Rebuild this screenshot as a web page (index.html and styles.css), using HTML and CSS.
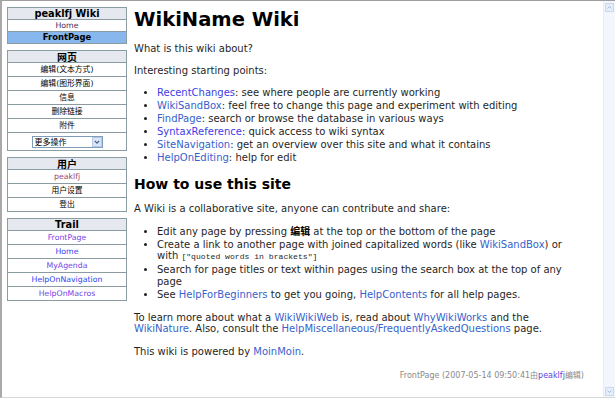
FILE: index.html
```html
<!DOCTYPE html>
<html>
<head>
<meta charset="utf-8">
<title>FrontPage - peaklfj Wiki</title>
<link rel="stylesheet" href="styles.css">
</head>
<body>
<div class="window">
  <div class="page">
    <div class="sidebar">
      <div class="panel">
        <div class="panel-title">peaklfj Wiki</div>
        <a class="row row-s link-home">Home</a>
        <a class="row row-s current">FrontPage</a>
      </div>
      <div class="panel">
        <div class="panel-title cjk-title">网页</div>
        <a class="row">编辑(文本方式)</a>
        <a class="row">编辑(图形界面)</a>
        <a class="row">信息</a>
        <a class="row">删除链接</a>
        <a class="row">附件</a>
        <div class="row row-select">
          <div class="select">
            <span class="select-text">更多操作</span>
            <span class="select-btn">
              <svg width="9" height="9" viewBox="0 0 9 9"><path d="M2 3.2 L4.5 5.8 L7 3.2" fill="none" stroke="#4d6185" stroke-width="1.5"/></svg>
            </span>
          </div>
        </div>
      </div>
      <div class="panel">
        <div class="panel-title cjk-title">用户</div>
        <a class="row link-user">peaklfj</a>
        <a class="row">用户设置</a>
        <a class="row">登出</a>
      </div>
      <div class="panel">
        <div class="panel-title">Trail</div>
        <a class="row link-v">FrontPage</a>
        <a class="row link-b">Home</a>
        <a class="row link-v">MyAgenda</a>
        <a class="row link-b">HelpOnNavigation</a>
        <a class="row link-v">HelpOnMacros</a>
      </div>
    </div>

    <div class="main">
      <h1>WikiName Wiki</h1>
      <p>What is this wiki about?</p>
      <p>Interesting starting points:</p>
      <ul>
        <li><a class="visited">RecentChanges</a>: see where people are currently working</li>
        <li><a>WikiSandBox</a>: feel free to change this page and experiment with editing</li>
        <li><a>FindPage</a>: search or browse the database in various ways</li>
        <li><a class="visited">SyntaxReference</a>: quick access to wiki syntax</li>
        <li><a>SiteNavigation</a>: get an overview over this site and what it contains</li>
        <li><a>HelpOnEditing</a>: help for edit</li>
      </ul>
      <h2>How to use this site</h2>
      <p>A Wiki is a collaborative site, anyone can contribute and share:</p>
      <ul>
        <li>Edit any page by pressing <strong class="cjk-bold">编辑</strong> at the top or the bottom of the page</li>
        <li><span>Create a link to another page with joined capitalized words (like </span><a>WikiSandBox</a><span>) or</span> <span>with</span> <code>["quoted words in brackets"]</code></li>
        <li>Search for page titles or text within pages using the search box at the top of any page</li>
        <li>See <a>HelpForBeginners</a> to get you going, <a>HelpContents</a> for all help pages.</li>
      </ul>
      <p>To learn more about what a <a>WikiWikiWeb</a> is, read about <a>WhyWikiWorks</a> and the <a>WikiNature</a>. Also, consult the <a>HelpMiscellaneous/FrequentlyAskedQuestions</a> page.</p>
      <p>This wiki is powered by <a>MoinMoin</a>.</p>
      <div class="footer">FrontPage (2007-05-14 09:50:41由<a class="footer-user">peaklfj</a>编辑)</div>
    </div>
  </div>
  <div class="scrollbar">
    <div class="sb-btn">
      <svg width="9" height="9" viewBox="0 0 9 9"><path d="M2 5.6 L4.5 3.2 L7 5.6" fill="none" stroke="#9fb2d2" stroke-width="1.2"/></svg>
    </div>
    <div class="sb-btn">
      <svg width="9" height="9" viewBox="0 0 9 9"><path d="M2 3.4 L4.5 5.8 L7 3.4" fill="none" stroke="#9fb2d2" stroke-width="1.2"/></svg>
    </div>
  </div>
</div>
</body>
</html>
```

FILE: styles.css
```css
html, body {
  margin: 0;
  padding: 0;
  background: #ffffff;
}

body {
  width: 615px;
  height: 398px;
  overflow: hidden;
  font-family: "DejaVu Sans", Verdana, "Noto Sans CJK SC", sans-serif;
}

.window {
  display: flex;
  width: 615px;
  height: 398px;
  box-sizing: border-box;
  border-top: 1px solid #9d9d9d;
  border-left: 2px solid #a9a9a9;
  border-bottom: 1px solid #d6d6d6;
  background: #ffffff;
}

.page {
  flex: 1;
  display: flex;
  gap: 7px;
  padding: 6px 0 0 5px;
  min-width: 0;
}

/* ---------- sidebar ---------- */
.sidebar {
  width: 120px;
  flex: none;
  display: flex;
  flex-direction: column;
  gap: 6px;
}

.panel {
  border: 1px solid #8a9ca2;
  background: #ffffff;
  display: flex;
  flex-direction: column;
}

.panel-title {
  height: 11px;
  line-height: 11px;
  background: #e5e8ee;
  text-align: center;
  font-size: 9.8px;
  font-weight: bold;
  color: #000000;
}

.cjk-title {
  font-family: "Noto Sans CJK SC", sans-serif;
  font-size: 10px;
}

.row {
  display: block;
  height: 13px;
  line-height: 13px;
  border-top: 1px solid #8a9ca2;
  text-align: center;
  font-size: 7.8px;
  color: #000000;
  text-decoration: none;
  font-family: "DejaVu Sans", "Noto Sans CJK SC", sans-serif;
  white-space: nowrap;
}

.row-s {
  height: 11px;
  line-height: 11px;
}

.current {
  background: #88b7ee;
  font-weight: bold;
  font-size: 8.4px;
}

.link-home { color: #4a2a5a; }
.link-user { color: #9a3f6e; }
.link-v { color: #7446e6; }
.link-b { color: #2d45f2; }

.row-select {
  height: 17px;
  display: flex;
  align-items: center;
  justify-content: center;
}

.select {
  width: 71px;
  height: 12px;
  box-sizing: border-box;
  border: 1px solid #7f9db9;
  background: #ffffff;
  display: flex;
  align-items: center;
  justify-content: space-between;
}

.select-text {
  padding-left: 2px;
  font-size: 8px;
  line-height: 10px;
  font-family: "Noto Sans CJK SC", sans-serif;
}

.select-btn {
  width: 10px;
  height: 10px;
  box-sizing: border-box;
  border: 1px solid #b6c8e6;
  background: #d9e6fa;
  display: flex;
  align-items: center;
  justify-content: center;
}

.select-btn svg {
  width: 8px;
  height: 8px;
}

/* ---------- main ---------- */
.main {
  flex: 1;
  min-width: 0;
  padding-top: 1px;
  padding-right: 19px;
  font-size: 10px;
  line-height: 11.7px;
  color: #1f1f1f;
}

.main h1 {
  font-size: 19.5px;
  line-height: 24px;
  margin: 0 0 9px;
  color: #000000;
}

.main h2 {
  font-size: 14px;
  line-height: 17px;
  margin: 11.5px 0 10.7px;
  color: #000000;
}

.main p {
  margin: 10.7px 0;
}

.main ul {
  margin: 10.7px 0;
  padding-left: 23px;
}

.main li {
  margin-bottom: 1.3px;
}

.main a {
  color: #3562cc;
  text-decoration: none;
}

.main a.visited {
  color: #3d3de4;
}

.cjk-bold {
  font-family: "Noto Sans CJK SC", sans-serif;
  font-weight: bold;
  color: #000000;
  line-height: 1;
}

.main code {
  font-family: "Liberation Mono", monospace;
  font-size: 8.1px;
}

.footer {
  margin-top: 13px;
  text-align: right;
  font-size: 8px;
  color: #8a8a8a;
  font-family: "DejaVu Sans", "Noto Sans CJK SC", sans-serif;
}

.main a.footer-user {
  color: #5b3fe0;
}

/* ---------- scrollbar ---------- */
.scrollbar {
  width: 12px;
  flex: none;
  box-sizing: border-box;
  background: #f3f7fd;
  border-left: 1px solid #e6edf8;
  display: flex;
  flex-direction: column;
  justify-content: space-between;
  padding: 2px 1px 1px 1px;
}

.sb-btn {
  width: 9px;
  height: 9px;
  box-sizing: border-box;
  border: 1px solid #cad8ee;
  background: #e5eefb;
  display: flex;
  align-items: center;
  justify-content: center;
}

.sb-btn svg {
  width: 7px;
  height: 7px;
}
```
